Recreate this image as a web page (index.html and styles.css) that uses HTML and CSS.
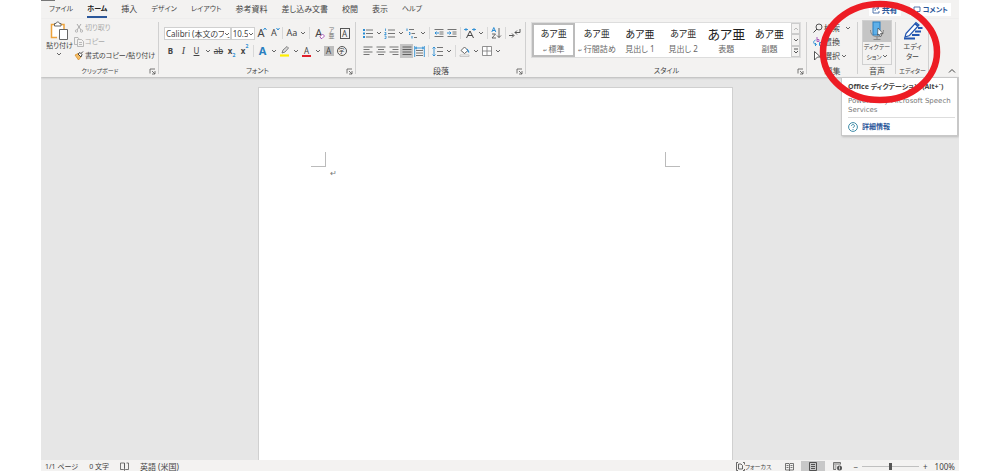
FILE: index.html
```html
<!DOCTYPE html>
<html lang="ja">
<head>
<meta charset="utf-8">
<title>Word</title>
<link rel="stylesheet" href="styles.css">
</head>
<body>
<svg class="defs" aria-hidden="true">
  <symbol id="chev" viewBox="0 0 6 6"><path d="M1 2l2 2 2-2" fill="none" stroke="#555" stroke-width=".9"/></symbol>
  <symbol id="launch" viewBox="0 0 7 7"><path d="M1 5.500V1h5M3 3l3 3M6 3v3H3" fill="none" stroke="#555" stroke-width=".8"/></symbol>
</svg>
<div class="app">
  <header class="tabs">
    <nav class="tab-list">
      <button class="tab kana">ファイル</button>
      <button class="tab kana tab-active">ホーム</button>
      <button class="tab">挿入</button>
      <button class="tab kana">デザイン</button>
      <button class="tab kana">レイアウト</button>
      <button class="tab">参考資料</button>
      <button class="tab">差し込み文書</button>
      <button class="tab">校閲</button>
      <button class="tab">表示</button>
      <button class="tab kana">ヘルプ</button>
    </nav>
    <div class="tab-actions">
      <button class="action"><svg width="8" height="8" viewBox="0 0 8 8"><path d="M3 2H1v5h6V5M3 5c0-2 1-3 3-3M5 .5L7 2 5 3.500" fill="none" stroke="#2b579a" stroke-width=".8"/></svg>共有</button>
      <button class="action kana"><svg width="8" height="8" viewBox="0 0 8 8"><path d="M1 1h6v4.500H4L2.500 7V5.500H1z" fill="none" stroke="#2b579a" stroke-width=".8"/></svg>コメント</button>
    </div>
  </header>

  <div class="ribbon">
    <section class="group g-clip">
      <div class="body">
        <button class="paste">
          <svg width="19" height="20" viewBox="0 0 19 20"><path d="M7 16.500H1.500v-13H14V8" fill="#fff" stroke="#eda33c" stroke-width="1.500"/><path d="M4.500 5V2.500H6C6 .5 9.500.5 9.500 2.500H11V5z" fill="#fff" stroke="#666"/><path d="M9.500 8.500h8v10h-8z" fill="#fff" stroke="#666"/></svg>
          <span class="paste-name">貼り付け</span>
          <svg class="chev"><use href="#chev"/></svg>
        </button>
        <div class="stack kana">
          <button class="line dim"><svg width="10" height="10" viewBox="0 0 10 10"><path d="M3 1l4 6M7 1L3 7" fill="none" stroke="#aaa"/><circle cx="2.500" cy="8" r="1.200" fill="none" stroke="#aaa" stroke-width=".8"/><circle cx="7.500" cy="8" r="1.200" fill="none" stroke="#aaa" stroke-width=".8"/></svg>切り取り</button>
          <button class="line dim"><svg width="10" height="10" viewBox="0 0 10 10"><path d="M3 7.500H.5v-7H4L5 2M3.500 2.500h4l2 2v5h-6zM5 5.500h3M5 7.500h3" fill="none" stroke="#aaa" stroke-width=".8"/></svg>コピー</button>
          <button class="line"><svg width="10" height="10" viewBox="0 0 10 10"><path d="M1 4l3-1.500L7 6 4.500 9z" fill="#f3bd68" stroke="#d98b20" stroke-width=".7"/><path d="M4 3l2-1.500 2 2L7 6zM7 2.500L9 .5" fill="#fff" stroke="#444" stroke-width="1"/></svg>書式のコピー/貼り付け</button>
        </div>
      </div>
      <footer class="label small"><span>クリップボード</span><button class="launch" aria-label="詳細"><svg><use href="#launch"/></svg></button></footer>
    </section>

    <section class="group g-font">
      <div class="body rows">
        <div class="row">
          <label class="combo combo-name"><select aria-label="フォント"><option>Calibri (本文のフォント)</option></select><svg class="chev"><use href="#chev"/></svg></label>
          <label class="combo combo-size"><select aria-label="サイズ"><option>10.5</option></select><svg class="chev"><use href="#chev"/></svg></label>
          <button class="tool big">A<svg class="corner" viewBox="0 0 4 4"><path d="M.5 3L2 1l1.500 2" fill="none" stroke="#2a8dd4"/></svg></button>
          <button class="tool mid">A<svg class="corner" viewBox="0 0 4 4"><path d="M.5 1L2 3l1.500-2" fill="none" stroke="#2a8dd4"/></svg></button>
          <i class="sep"></i>
          <button class="tool mid">Aa</button><button class="drop" aria-label="文字種"><svg class="chev"><use href="#chev"/></svg></button>
          <i class="sep"></i>
          <button class="tool big">A<svg class="eraser" viewBox="0 0 6 6"><path d="M1 3.500L3.500 1l2 2L3 5.500H2z" fill="#fff" stroke="#a44fb5" stroke-width=".9"/></svg></button>
          <button class="tool ruby"><span>ア</span><span>亜</span></button>
          <button class="tool"><span class="boxed">A</span></button>
        </div>
        <div class="row">
          <button class="tool bold">B</button>
          <button class="tool ital">I</button>
          <button class="tool under">U</button><button class="drop" aria-label="下線"><svg class="chev"><use href="#chev"/></svg></button>
          <button class="tool strike">ab</button>
          <button class="tool bold">x<sub>2</sub></button>
          <button class="tool bold">x<sup>2</sup></button>
          <i class="sep"></i>
          <button class="tool effect">A</button><button class="drop" aria-label="効果"><svg class="chev"><use href="#chev"/></svg></button>
          <button class="tool" aria-label="蛍光ペン"><svg width="11" height="11" viewBox="0 0 11 11"><path d="M1 9.500h9" stroke="#ffee00" stroke-width="2.200"/><path d="M3 7l1-3 4-3.500L9.500 2 6 6z" fill="#ddd" stroke="#666" stroke-width=".8"/></svg></button><button class="drop" aria-label="蛍光ペンの色"><svg class="chev"><use href="#chev"/></svg></button>
          <button class="tool color">A</button><button class="drop" aria-label="文字色"><svg class="chev"><use href="#chev"/></svg></button>
          <button class="tool"><span class="shade">A</span></button>
          <button class="tool"><span class="round">字</span></button>
        </div>
      </div>
      <footer class="label kana"><span>フォント</span><button class="launch" aria-label="詳細"><svg><use href="#launch"/></svg></button></footer>
    </section>

    <section class="group g-para">
      <div class="body rows">
        <div class="row">
          <button class="tool" aria-label="箇条書き"><svg width="11" height="11" viewBox="0 0 11 11"><path d="M4 2h7M4 5.500h7M4 9h7" stroke="#666" stroke-width=".9"/><path d="M1 2h2M1 5.500h2M1 9h2" stroke="#2a8dd4" stroke-width="2"/></svg></button><button class="drop" aria-label="箇条書きの種類"><svg class="chev"><use href="#chev"/></svg></button>
          <button class="tool" aria-label="段落番号"><svg width="11" height="11" viewBox="0 0 11 11"><path d="M4 2h7M4 5.500h7M4 9h7" stroke="#666" stroke-width=".9"/><path d="M1.500.5v2.500M.5 4.500h1.500v1L.5 6.500h2M.5 8h1.500v2.500H.5" fill="none" stroke="#2a8dd4" stroke-width=".8"/></svg></button><button class="drop" aria-label="番号の種類"><svg class="chev"><use href="#chev"/></svg></button>
          <button class="tool" aria-label="アウトライン"><svg width="11" height="11" viewBox="0 0 11 11"><path d="M3 1.500h5M5.500 5.500H9M8 9.500h3" stroke="#666" stroke-width=".9"/><path d="M1 .5v2.500M3 4.500h1v2H3M6 8v2.500" fill="none" stroke="#2a8dd4" stroke-width="1"/></svg></button><button class="drop" aria-label="リスト"><svg class="chev"><use href="#chev"/></svg></button>
          <i class="sep"></i>
          <button class="tool" aria-label="インデントを減らす"><svg width="10" height="10" viewBox="0 0 10 10"><path d="M.5 1.500h9M5.500 4h4M5.500 6h4M.5 8.500h9" stroke="#666" stroke-width=".9"/><path d="M5 5H1M2.500 3.500L1 5l1.500 1.500" fill="none" stroke="#2a8dd4"/></svg></button>
          <button class="tool" aria-label="インデントを増やす"><svg width="10" height="10" viewBox="0 0 10 10"><path d="M.5 1.500h9M5.500 4h4M5.500 6h4M.5 8.500h9" stroke="#666" stroke-width=".9"/><path d="M0 5h4M2.500 3.500L4 5 2.500 6.500" fill="none" stroke="#2a8dd4"/></svg></button>
          <i class="sep"></i>
          <button class="tool" aria-label="拡張書式"><svg width="12" height="11" viewBox="0 0 12 11"><path d="M2.500 10L6 3l3.500 7M4 7.500h4" fill="none" stroke="#444"/><path d="M0 1.500h4M8 1.500h4M2 0v3M10 0v3" stroke="#2a8dd4" stroke-width=".9"/></svg></button><button class="drop" aria-label="拡張書式の種類"><svg class="chev"><use href="#chev"/></svg></button>
          <i class="sep"></i>
          <button class="tool" aria-label="並べ替え"><svg width="11" height="12" viewBox="0 0 11 12"><path d="M.8 5L2.800.5 4.800 5M1.500 3.500h2.600" fill="none" stroke="#2a8dd4"/><path d="M1 7h3.500L1 11h4M8 1v9.500M6 8.500l2 2 2-2" fill="none" stroke="#555" stroke-width=".9"/></svg></button>
          <i class="sep"></i>
          <button class="tool" aria-label="編集記号"><svg width="12" height="11" viewBox="0 0 12 11"><path d="M0 7.500h4.500M3 5.500l2 2-2 2M11 1v3.500H6M8 2.500l-2 2 2 2" fill="none" stroke="#444" stroke-width=".9"/></svg></button>
        </div>
        <div class="row">
          <button class="tool" aria-label="左揃え"><svg width="10" height="10" viewBox="0 0 10 10"><path d="M.5 1h9M.5 3.500h6M.5 6h9M.5 8.500h6" stroke="#666" stroke-width=".9"/></svg></button>
          <button class="tool" aria-label="中央揃え"><svg width="10" height="10" viewBox="0 0 10 10"><path d="M.5 1h9M2 3.500h6M.5 6h9M2 8.500h6" stroke="#666" stroke-width=".9"/></svg></button>
          <button class="tool" aria-label="右揃え"><svg width="10" height="10" viewBox="0 0 10 10"><path d="M.5 1h9M3.500 3.500h6M.5 6h9M3.500 8.500h6" stroke="#666" stroke-width=".9"/></svg></button>
          <button class="tool on" aria-label="両端揃え"><svg width="10" height="10" viewBox="0 0 10 10"><path d="M.5 1h9M.5 3.500h9M.5 6h9M.5 8.500h9" stroke="#555" stroke-width=".9"/></svg></button>
          <button class="tool" aria-label="均等割り付け"><svg width="11" height="11" viewBox="0 0 11 11"><path d="M2 4.500h7M2 7h7M2 9.500h7" stroke="#666" stroke-width=".9"/><path d="M.7 0v11M10.300 0v11M1 2h9M3 .8L1.500 2 3 3.200M8 .8L9.500 2 8 3.200" fill="none" stroke="#2a8dd4" stroke-width=".9"/></svg></button>
          <i class="sep"></i>
          <button class="tool" aria-label="行間"><svg width="11" height="11" viewBox="0 0 11 11"><path d="M5 1.500h6M5 5.500h6M5 9.500h6" stroke="#666" stroke-width=".9"/><path d="M2 1v9M.5 2.500L2 1l1.500 1.500M.5 8.500L2 10l1.500-1.500" fill="none" stroke="#2a8dd4" stroke-width=".9"/></svg></button><button class="drop" aria-label="行間の値"><svg class="chev"><use href="#chev"/></svg></button>
          <i class="sep"></i>
          <button class="tool" aria-label="塗りつぶし"><svg width="11" height="11" viewBox="0 0 11 11"><path d="M1 9h9v1.500H1z" fill="#fff" stroke="#aaa" stroke-width=".6"/><path d="M2 4.500L5.500 1 9 4.500 5.500 7.500z" fill="#fff" stroke="#555" stroke-width=".9"/><path d="M8 3l2 3.500" stroke="#2a8dd4" stroke-width="1.200"/></svg></button><button class="drop" aria-label="塗りの色"><svg class="chev"><use href="#chev"/></svg></button>
          <button class="tool" aria-label="罫線"><svg width="10" height="10" viewBox="0 0 10 10"><path d="M.5.5h9v9h-9zM5 .5v9M.5 5h9" fill="#fff" stroke="#777" stroke-width=".8"/></svg></button><button class="drop" aria-label="罫線の種類"><svg class="chev"><use href="#chev"/></svg></button>
        </div>
      </div>
      <footer class="label"><span>段落</span><button class="launch" aria-label="詳細"><svg><use href="#launch"/></svg></button></footer>
    </section>

    <section class="group g-style">
      <div class="body">
        <div class="gallery">
          <button class="style style-on"><b>あア亜</b><span><small>↵</small> 標準</span></button>
          <button class="style"><b>あア亜</b><span><small>↵</small> 行間詰め</span></button>
          <button class="style"><b class="s2">あア亜</b><span>見出し 1</span></button>
          <button class="style"><b>あア亜</b><span>見出し 2</span></button>
          <button class="style"><b class="s3">あア亜</b><span>表題</span></button>
          <button class="style"><b class="s2">あア亜</b><span>副題</span></button>
          <div class="scroller">
            <button aria-label="上へ"><svg class="chev" viewBox="0 0 6 6"><path d="M1 4l2-2 2 2" fill="none" stroke="#aaa" stroke-width=".8"/></svg></button>
            <button aria-label="下へ"><svg class="chev"><use href="#chev"/></svg></button>
            <button aria-label="その他"><svg class="chev" viewBox="0 0 6 6"><path d="M1 1h4M1 3l2 2 2-2" fill="none" stroke="#444" stroke-width=".9"/></svg></button>
          </div>
        </div>
      </div>
      <footer class="label kana"><span>スタイル</span><button class="launch" aria-label="詳細"><svg><use href="#launch"/></svg></button></footer>
    </section>

    <section class="group g-edit">
      <div class="body">
        <div class="stack">
          <button class="line"><svg width="10" height="10" viewBox="0 0 10 10"><circle cx="6" cy="4" r="3" fill="none" stroke="#444" stroke-width=".9"/><path d="M4 6L.5 9.500" stroke="#444"/></svg>検索<svg class="chev far"><use href="#chev"/></svg></button>
          <button class="line"><svg width="10" height="10" viewBox="0 0 10 10"><path d="M4 0v4.500h2v-2H4" fill="none" stroke="#a44fb5" stroke-width=".9"/><path d="M2.500 3C0 4 0 7 3 7.500M2 6l1.500 1.500L2 9M9 5.500H6.500v3H9" fill="none" stroke="#2a8dd4"/></svg>置換</button>
          <button class="line"><svg width="10" height="10" viewBox="0 0 10 10"><path d="M1.500.5l6 5.500H4.500l-3 3z" fill="#fff" stroke="#444" stroke-width=".9"/></svg>選択<svg class="chev"><use href="#chev"/></svg></button>
        </div>
      </div>
      <footer class="label"><span>編集</span></footer>
    </section>

    <section class="group g-voice">
      <div class="body">
        <button class="tall tall-on">
          <span class="pic"><svg width="18" height="20" viewBox="0 0 18 20"><path d="M2.500 9c0 9 13 9 13 0M9 16v2.500M5.500 18.500h7" fill="none" stroke="#888"/><rect x="5" y="1" width="7" height="13" fill="#5fb0e8" stroke="#2a7fc0"/><path d="M10 7l5 5.500h-2.500l1 2.500-1.500.5-1-2.500-1.500 1z" fill="#fff" stroke="#333" stroke-width=".6"/></svg></span>
          <span class="cap small">ディクテー<br>ション<svg class="chev"><use href="#chev"/></svg></span>
        </button>
      </div>
      <footer class="label"><span>音声</span></footer>
    </section>

    <section class="group g-editor">
      <div class="body">
        <button class="tall">
          <span class="pic"><svg width="20" height="20" viewBox="0 0 20 20"><path d="M3 12.500L13 1.500l3 2.500L6.500 14.500 2 16z" fill="#fff" stroke="#2356b0" stroke-width="1.200"/><path d="M12 2.500l3 2.500" stroke="#2356b0" stroke-width="2"/><path d="M15 7h4.500M12 10.500h6M9 14h7.500M1 17.500h11" stroke="#2356b0" stroke-width="2"/></svg></span>
          <span class="cap kana">エディ<br>ター</span>
        </button>
      </div>
      <footer class="label small"><span>エディター</span></footer>
    </section>
    <button class="collapse" aria-label="リボンを折りたたむ"><svg width="8" height="6" viewBox="0 0 8 6"><path d="M1 4.500l3-3 3 3" fill="none" stroke="#444"/></svg></button>
  </div>

  <main class="canvas">
    <article class="page">
      <div class="marks"><i class="mark-l"></i><i class="mark-r"></i></div>
      <p class="para">↵</p>
    </article>
  </main>

  <footer class="status">
    <span class="kana">1/1 ページ</span>
    <span class="kana">0 文字</span>
    <svg width="9" height="9" viewBox="0 0 9 9"><path d="M4.500 8V1H.5v6.500h3L4.500 8.500l1-1h3V1h-2M4.500 1v5" fill="none" stroke="#555" stroke-width=".8"/></svg>
    <span>英語 (米国)</span>
    <div class="view">
      <button class="focus small"><svg width="9" height="9" viewBox="0 0 9 9"><path d="M2 .5H.5V8.500H2M7 .5h1.500v2M7 8.500h1.500V7M2.500 2h2.500l1.500 1.500V7h-4z" fill="none" stroke="#444" stroke-width=".8"/></svg>フォーカス</button>
      <button class="mode" aria-label="閲覧モード"><svg width="9" height="8" viewBox="0 0 9 8"><path d="M.5.5h3.500l.5.500.500-.5h3.500v6.500H.5zM4.500 1v7M1.500 2.500h2M1.500 4.500h2M5.500 2.500h2M5.500 4.500h2" fill="none" stroke="#555" stroke-width=".8"/></svg></button>
      <button class="mode mode-on" aria-label="印刷レイアウト"><svg width="8" height="9" viewBox="0 0 8 9"><path d="M.5.5h7v8h-7zM2 2.500h4M2 4.500h4M2 6.500h4" fill="none" stroke="#444" stroke-width=".9"/></svg></button>
      <button class="mode" aria-label="Web レイアウト"><svg width="9" height="9" viewBox="0 0 9 9"><path d="M3 7.500H.5v-7h7v2M1 2h6M1.500 4h2M1.500 6h2" fill="none" stroke="#555" stroke-width=".8"/><circle cx="6.500" cy="6" r="2.500" fill="#555"/><path d="M6.500 4.500v3" stroke="#fff" stroke-width=".7"/></svg></button>
      <div class="zoom"><button aria-label="縮小">−</button><input type="range" class="slider" min="0" max="100" value="50" aria-label="ズーム"><button aria-label="拡大">+</button></div>
      <span>100%</span>
    </div>
  </footer>

  <aside class="tip">
    <h2>Office ディクテーション (Alt+`)</h2>
    <p>Powered by Microsoft Speech Services</p>
    <a href="#"><svg width="10" height="10" viewBox="0 0 10 10"><circle cx="5" cy="5" r="4.400" fill="none" stroke="#2a7f9e" stroke-width=".9"/><path d="M3.500 4c0-2 3-2 3 0 0 1-1.500 1-1.500 2M5 7v1" fill="none" stroke="#2a7f9e" stroke-width=".9"/></svg>詳細情報</a>
  </aside>
  <svg class="ring" viewBox="0 0 122 104" aria-hidden="true"><ellipse cx="61" cy="52" rx="57" ry="48" fill="none" stroke="#ed1c24" stroke-width="6.500"/></svg>
</div>
</body>
</html>
```
FILE: styles.css
```css
* { box-sizing: border-box; }
body {
  margin: 0;
  background: #fff;
  font: 8px/10px "Noto Sans", "Noto Sans CJK JP", sans-serif;
  font-feature-settings: "palt";
  color: #444;
}
button, select, input {
  margin: 0;
  padding: 0;
  border: 0;
  background: none;
  font: inherit;
  font-feature-settings: inherit;
  color: inherit;
  white-space: nowrap;
}
svg { display: block; flex: none; }
.defs { position: absolute; width: 0; height: 0; }
.chev { width: 6px; height: 6px; }
.kana { font-size: 7px; }
.small { font-size: 6px; }

.app {
  position: relative;
  display: flex;
  flex-direction: column;
  height: 100vh;
  margin: 0 41px;
  background: #e6e6e6;
  overflow: hidden;
}

/* Tabs */
.tabs {
  display: flex;
  justify-content: space-between;
  height: 19px;
  padding: 1px 8px 0;
  background: linear-gradient(#777, #777) 0 0 / 14px 1px no-repeat #f3f2f1;
}
.tab-list { display: flex; gap: 14px; }
.tab { border-bottom: 2px solid transparent; height: 17px; }
.tab-active { color: #222; font-weight: 700; border-color: #2b579a; }
.tab-actions { display: flex; gap: 9px; padding-top: 2px; }
.action {
  display: flex;
  align-items: center;
  gap: 2px;
  height: 13px;
  padding: 0 3px;
  background: #fff;
  color: #2b579a;
  font-weight: 700;
}

/* Ribbon */
.ribbon {
  display: flex;
  height: 58px;
  background: #f3f2f1;
  box-shadow: 0 1px 2px #b8b8b8;
  z-index: 1;
}
.group { position: relative; display: flex; flex-direction: column; min-width: 0; }
.group::after {
  content: "";
  position: absolute;
  right: 0;
  top: 3px;
  bottom: 3px;
  border-right: 1px solid #d0d0d0;
}
.g-clip { flex: 0 0 118px; }
.g-font { flex: 0 0 197px; }
.g-para { flex: 0 0 170px; }
.g-style { flex: 1 1 281px; }
.g-edit { flex: 0 0 51px; }
.g-voice { flex: 0 0 38px; }
.g-editor { flex: 0 0 33px; }
.body { display: flex; flex: 1; padding: 2px 4px 0; }
.label { position: relative; height: 11px; text-align: center; }
.launch { position: absolute; right: 3px; top: 2px; }
.launch svg { width: 7px; height: 7px; }

.paste { display: flex; flex-direction: column; align-items: center; width: 29px; }
.paste-name { font-size: 7px; }
.stack { display: flex; flex-direction: column; }
.g-edit .stack { padding-left: 2px; }
.line { display: flex; align-items: center; gap: 1px; height: 14px; }
.dim { color: #aaa; }
.far { margin-left: 4px; }

.rows { flex-direction: column; gap: 4px; padding: 7px 5px 0; }
.row { display: flex; align-items: center; height: 14px; }
.combo { position: relative; height: 13px; background: #fff; border: 1px solid #d0d0d0; }
.combo select { width: 100%; height: 11px; padding-left: 1px; appearance: none; overflow: hidden; line-height: 11px; }
.combo .chev { position: absolute; right: 0; top: 3px; background: #fff; }
.combo-name { width: 67px; }
.combo-size { width: 24px; }
.tool { position: relative; display: flex; align-items: center; justify-content: center; width: 13px; height: 14px; }
.drop { display: flex; align-items: center; justify-content: center; width: 9px; height: 14px; }
.sep { width: 1px; height: 12px; margin: 0 2px; background: #d8d8d8; }
.on { background: #c5c5c5; }
.big { font-size: 11px; }
.mid { font-size: 9px; }
.bold { font-weight: 700; }
.ital { font-family: "Liberation Serif", serif; font-style: italic; font-size: 10px; }
.under { text-decoration: underline; }
.strike { text-decoration: line-through; }
.tool sub, .tool sup { font-size: 5px; line-height: 5px; color: #2a8dd4; }
.tool sub { align-self: flex-end; }
.tool sup { align-self: flex-start; }
.corner { position: absolute; right: 0; top: 1px; width: 4px; height: 4px; }
.eraser { position: absolute; right: 0; bottom: 1px; width: 6px; height: 6px; }
.ruby { flex-direction: column; font-size: 6px; line-height: 6px; color: #777; }
.boxed { width: 10px; border: 1px solid #555; line-height: 9px; }
.shade { width: 10px; background: #bdbdbd; }
.round { width: 10px; border: 1px solid #555; border-radius: 5px; font-size: 6px; line-height: 8px; }
.effect { color: #2a7fc0; font-size: 11px; font-weight: 700; }
.color { line-height: 9px; padding-bottom: 2px; }
.color::after { content: ""; position: absolute; left: 2px; right: 2px; bottom: 1px; border-bottom: 2px solid #e0202b; }

/* Style gallery */
.gallery { display: flex; flex: 1; height: 36px; margin-top: 1px; background: #fff; border: 1px solid #ddd; }
.g-style .body { padding: 2px 6px 0 5px; }
.style { display: flex; flex: 1 1 43px; flex-direction: column; align-items: center; gap: 3px; min-width: 0; padding-top: 4px; color: #666; border: 0 solid #bcbcbc; }
.style b { height: 14px; font-size: 9px; line-height: 14px; font-weight: 400; color: #222; }
.style b.s2 { font-size: 10px; }
.style b.s3 { font-size: 13px; }
.style small { font-size: 5px; }
.style-on { padding-top: 2px; border-width: 2px; }
.scroller { display: flex; flex-direction: column; width: 9px; background: #f3f2f1; }
.scroller button { display: flex; flex: 1; align-items: center; justify-content: center; border: 1px solid #ccc; }

/* Dictation and editor */
.tall { display: flex; flex-direction: column; flex: 1; align-items: center; height: 45px; margin-top: -1px; border: 1px solid transparent; }
.tall-on { border-color: #d0d0d0; }
.tall-on .pic { background: #c5c5c5; }
.pic { display: flex; justify-content: center; align-self: stretch; padding-bottom: 1px; }
.cap { line-height: 10px; }
.cap .chev { display: inline-block; }
.collapse { display: flex; flex: 0 0 30px; align-items: flex-end; justify-content: flex-end; padding: 0 3px 3px 0; }

/* Document */
.canvas { display: flex; flex: 1; justify-content: center; min-height: 0; padding: 10px 10px 0 0; }
.page { width: 475px; padding-top: 64px; background: #fff; border: 1px solid #d0d0d0; border-bottom: 0; }
.marks { display: flex; justify-content: space-between; padding: 0 52px; }
.mark-l, .mark-r { width: 15px; height: 15px; border-bottom: 1px solid #bbb; }
.mark-l { border-right: 1px solid #bbb; }
.mark-r { border-left: 1px solid #bbb; }
.para { margin: 1px 0 0 71px; color: #777; }

/* Status bar */
.status { display: flex; align-items: center; gap: 11px; height: 11px; padding: 2px 4px 0; background: #f3f2f1; }
.view { display: flex; align-items: center; margin-left: auto; }
.focus { display: flex; align-items: center; margin-right: 6px; }
.mode { display: flex; align-items: center; justify-content: center; width: 24px; height: 11px; }
.mode-on { background: #c8c8c8; }
.zoom { display: flex; align-items: center; gap: 4px; margin: 0 7px 0 4px; }
.slider { width: 57px; height: 7px; appearance: none; background: linear-gradient(#c0c0c0, #c0c0c0) center / 100% 1px no-repeat; }
.slider::-webkit-slider-thumb { appearance: none; width: 3px; height: 7px; background: #555; }

/* Tooltip */
.tip {
  position: absolute;
  right: 1px;
  top: 77px;
  z-index: 2;
  width: 117px;
  padding: 4px 2px 3px 6px;
  background: #fff;
  border: 1px solid #c8c8c8;
  box-shadow: 1px 1px 2px #bbb;
}
.tip h2 { margin: 0; font-size: 7px; line-height: 10px; color: #444; white-space: nowrap; }
.tip p { margin: 5px 0 0; padding-bottom: 2px; font-family: "DejaVu Sans", sans-serif; font-size: 7px; line-height: 9px; color: #777; border-bottom: 1px solid #ddd; }
.tip a { display: flex; align-items: center; gap: 4px; margin-top: 4px; color: #2b579a; font-size: 7px; font-weight: 700; text-decoration: none; }

.ring { position: absolute; right: 18px; top: 0; z-index: 3; width: 122px; height: 104px; }
```
